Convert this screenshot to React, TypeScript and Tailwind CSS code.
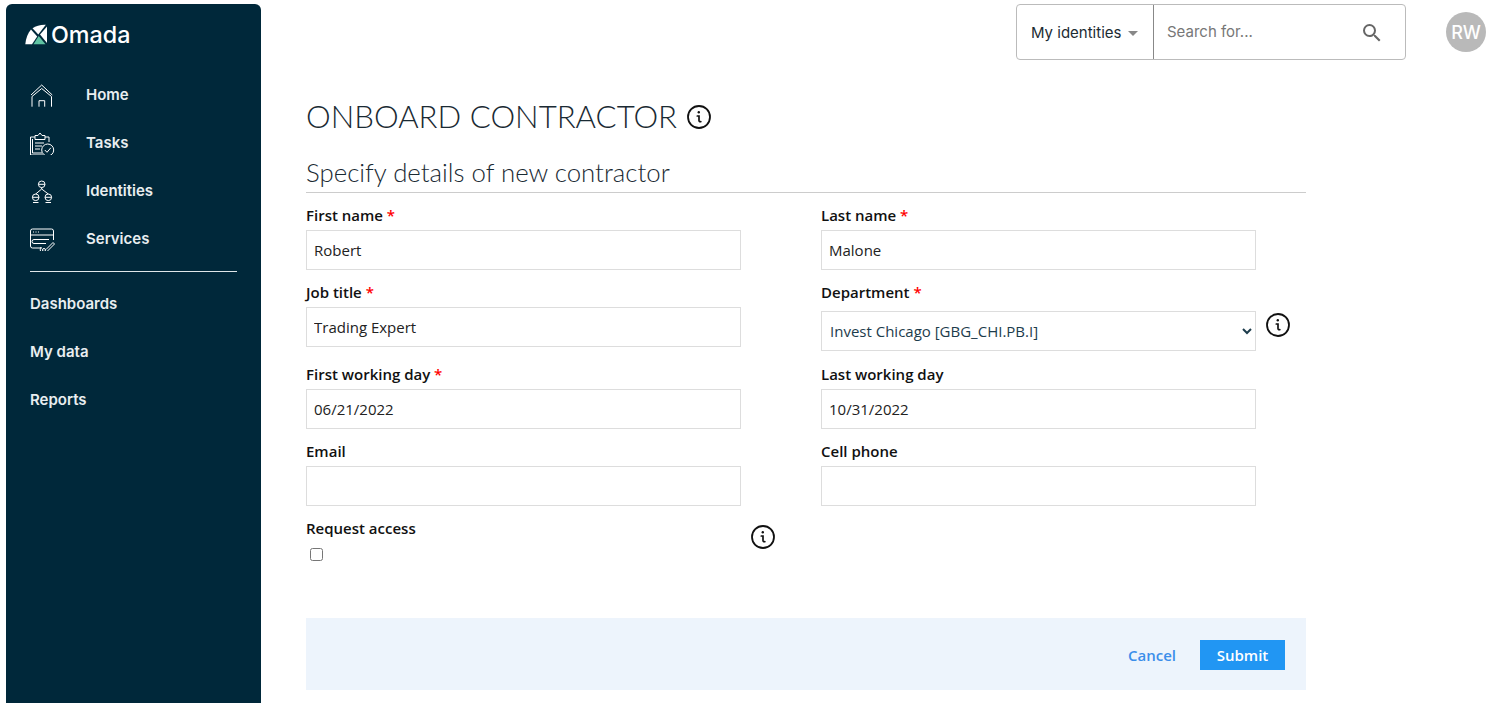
import { ReactNode } from "react"

const navFont = "font-['Inter','Liberation_Sans',sans-serif]"
const bodyFont = "font-['Open_Sans','Liberation_Sans',sans-serif]"
const headFont = "font-['Lato','Liberation_Sans',sans-serif]"

function InfoIcon() {
  return (
    <svg width="24" height="24" viewBox="0 0 24 24" fill="none" stroke="#111" className="shrink-0">
      <circle cx="12" cy="12" r="11" strokeWidth="1.800" />
      <circle cx="11.800" cy="7.200" r="1.200" fill="#111" stroke="none" />
      <path d="M10.300 11h1.700v4.600c0 1 .7 1.400 1.800 1" strokeWidth="1.700" strokeLinecap="round" />
    </svg>
  )
}

function OmadaLogo() {
  return (
    <svg width="22" height="22" viewBox="0 0 22 22" className="shrink-0">
      <path d="M.3 20.300C.8 14.300 2.900 9.300 6 5.500L12.200 12.500 7 20.300Z" fill="#fff" />
      <path d="M7.500 4.300C11 1.800 15.500 .6 20.800 .8L13.300 10.500Z" fill="#fff" />
      <path d="M22 2.500V19L15 10.500Z" fill="#fff" />
      <path d="M8.500 20.300 13.700 12 20.500 20.300Z" fill="#5fc3a3" />
    </svg>
  )
}

function HomeIcon() {
  return (
    <svg width="26" height="26" viewBox="0 0 26 26" fill="none" stroke="#fff" strokeWidth="1">
      <path d="M2 14 12.700 4l10.600 10" />
      <path d="M3 25.700V15.500l9.700-8 9.800 8v10.200" />
      <path d="M10 25.700v-6h5.700v6" />
    </svg>
  )
}

function TasksIcon() {
  return (
    <svg width="26" height="26" viewBox="0 0 26 26" fill="none" stroke="#fff" strokeWidth="1">
      <path d="M6 8H1.500v18H14" />
      <path d="M3.500 10v14H13" />
      <path d="M16 8h4v5" />
      <path d="M6 10.500h10V6.500h-3L11 4 9 6.500H6Z" />
      <path d="M6 14h9M6 17h7M6 20h5" />
      <circle cx="18.700" cy="21" r="6" />
      <path d="m15.800 21 2.200 2.300 3.800-4.500" />
    </svg>
  )
}

function IdentitiesIcon() {
  return (
    <svg width="26" height="26" viewBox="0 0 26 26" fill="none" stroke="#fff" strokeWidth="1">
      <circle cx="12.700" cy="7.300" r="3.300" />
      <circle cx="6.700" cy="20.300" r="3.300" />
      <circle cx="19.300" cy="20.300" r="3.300" />
      <path d="M9.400 7.300h6.600M3.400 20.300H10M16 20.300h6.600" />
      <path d="M12.700 10.600V12L6.700 17M12.700 12l6.600 5" />
      <path d="M4 25.500h5.500M16.500 25.500H22" />
    </svg>
  )
}

function ServicesIcon() {
  return (
    <svg width="26" height="26" viewBox="0 0 26 26" fill="none" stroke="#fff" strokeWidth="1">
      <path d="M24.500 15V6a2 2 0 0 0-2-2h-19a2 2 0 0 0-2 2v15a2 2 0 0 0 2 2H13" />
      <path d="M1.500 10h23" />
      <path d="M4 7h1M6.500 7h1M9 7h1" />
      <path d="M20 14.500H5a1.800 1.800 0 0 0 0 4h12" />
      <path d="m18.500 26 7-7-1.500-1.500-7 7" />
      <circle cx="15" cy="25" r="1.500" />
      <path d="M12 22c-1 1.500-1 4.500 0 4.500" />
    </svg>
  )
}

function NavItem({ icon, label }: { icon: ReactNode; label: string }) {
  return (
    <a className="flex h-[48px] items-center pl-[23px]">
      <span className="flex w-[57px] items-center">{icon}</span>
      <span className="pt-[2px] text-[15px] font-semibold text-[#e9eef0]">{label}</span>
    </a>
  )
}

function Sidebar() {
  return (
    <aside className={`${navFont} w-[255px] shrink-0 rounded-t-md bg-[#00283a]`}>
      <div className="mt-[15px] flex h-[31px] items-center gap-[4px] pl-[19px]">
        <OmadaLogo />
        <span className="text-[23.300px] font-medium leading-none text-white">Omada</span>
      </div>
      <nav className="mt-[20px]">
        <NavItem icon={<HomeIcon />} label="Home" />
        <NavItem icon={<TasksIcon />} label="Tasks" />
        <NavItem icon={<IdentitiesIcon />} label="Identities" />
        <NavItem icon={<ServicesIcon />} label="Services" />
      </nav>
      <div className="mx-[24px] mb-[8px] mt-[9px] h-px w-[207px] bg-[#dfe6e9]" />
      <nav>
        {["Dashboards", "My data", "Reports"].map((item) => (
          <a key={item} className="flex h-[48px] items-center pl-[24px] text-[15px] font-semibold text-[#e9eef0]">
            {item}
          </a>
        ))}
      </nav>
    </aside>
  )
}

function TopBar() {
  return (
    <div className="flex items-start justify-end">
      <div className={`${navFont} flex h-[56px] w-[390px] rounded border border-[#bbb] text-[15px]`}>
        <div className="flex w-[137px] items-center gap-[7px] border-r border-[#888] pl-[14px] pt-[2px] text-[#1c2b33]">
          My identities
          <span className="h-0 w-0 border-x-[5px] border-t-[5px] border-x-transparent border-t-[#888]" />
        </div>
        <div className="flex flex-1 items-center pl-[13px] pr-[21px] pt-[1px]">
          <input placeholder="Search for..." className="w-full min-w-0 bg-transparent outline-none placeholder:text-[#777]" />
          <svg width="24" height="24" viewBox="0 0 24 24" fill="#666" className="shrink-0">
            <path d="M15.500 14h-.79l-.28-.27A6.471 6.471 0 0 0 16 9.500 6.500 6.500 0 1 0 9.500 16c1.610 0 3.090-.59 4.230-1.570l.27.28v.79l5 4.990L20.490 19l-4.990-5zm-6 0C7.010 14 5 11.990 5 9.500S7.010 5 9.500 5 14 7.010 14 9.500 11.990 14 9.500 14z" />
          </svg>
        </div>
      </div>
      <div className={`${navFont} ml-[40px] mr-[9px] mt-[8px] flex h-[40px] w-[40px] items-center justify-center rounded-full bg-[#b9b9b9] text-[18px] font-medium text-white`}>
        RW
      </div>
    </div>
  )
}

function FieldLabel({ text, required }: { text: string; required?: boolean }) {
  return (
    <label className="block h-[26px] text-[15px] font-semibold leading-[22px] text-[#111]">
      {text}
      {required && <span className="text-[#f00]"> *</span>}
    </label>
  )
}

function TextField({ label, value, required }: { label: string; value?: string; required?: boolean }) {
  return (
    <div>
      <FieldLabel text={label} required={required} />
      <input
        readOnly
        value={value ?? ""}
        className="block h-[40px] w-full border border-[#ddd] bg-white px-[7px] text-[15px] text-[#222] outline-none"
      />
    </div>
  )
}

export default function App() {
  return (
    <div className={`${bodyFont} flex h-screen overflow-hidden bg-white pl-[6px] pt-[4px]`}>
      <Sidebar />
      <main className="min-w-0 flex-1">
        <TopBar />
        <div className="ml-[45px] w-[1000px]">
          <h1 className={`${headFont} mt-[36px] flex h-[42px] items-center gap-[10px] text-[31.200px] font-light leading-none text-[#1a2a33]`}>
            ONBOARD CONTRACTOR
            <InfoIcon />
          </h1>
          <h2 className={`${headFont} mt-[16px] h-[39px] border-b border-[#ccc] text-[25.800px] font-light leading-[36px] text-[#1a2a33]`}>
            Specify details of new contractor
          </h2>
          <form className="mt-[11px] grid grid-cols-[435px_435px] gap-x-[80px] gap-y-[11px]">
            <TextField label="First name" value="Robert" required />
            <TextField label="Last name" value="Malone" required />
            <TextField label="Job title" value="Trading Expert" required />
            <div className="mb-px">
              <FieldLabel text="Department" required />
              <div className="mt-[4px] flex w-[470px] items-start gap-[10px]">
                <select className="block h-[40px] w-[435px] shrink-0 border border-[#ddd] bg-white px-[4px] text-[15px] text-[#1d3c4c] outline-none">
                  <option>Invest Chicago [GBG_CHI.PB.I]</option>
                </select>
                <span className="mt-[2px]">
                  <InfoIcon />
                </span>
              </div>
            </div>
            <TextField label="First working day" value="06/21/2022" required />
            <TextField label="Last working day" value="10/31/2022" />
            <TextField label="Email" />
            <TextField label="Cell phone" />
            <div className="flex w-[470px] items-start gap-[10px]">
              <div className="w-[435px] shrink-0">
                <FieldLabel text="Request access" />
                <input type="checkbox" className="ml-[4px] mt-[5px] block h-[13px] w-[13px]" />
              </div>
              <span className="mt-[8px]">
                <InfoIcon />
              </span>
            </div>
          </form>
          <div className="mt-[57px] flex h-[72px] items-center justify-end gap-[24px] bg-[#edf4fc] pr-[21px] pt-[2px]">
            <button type="button" className="text-[15px] font-semibold text-[#3b8eea]">
              Cancel
            </button>
            <button type="button" className="h-[30px] w-[85px] bg-[#2196f3] text-[15px] font-semibold text-white">
              Submit
            </button>
          </div>
        </div>
      </main>
    </div>
  )
}
